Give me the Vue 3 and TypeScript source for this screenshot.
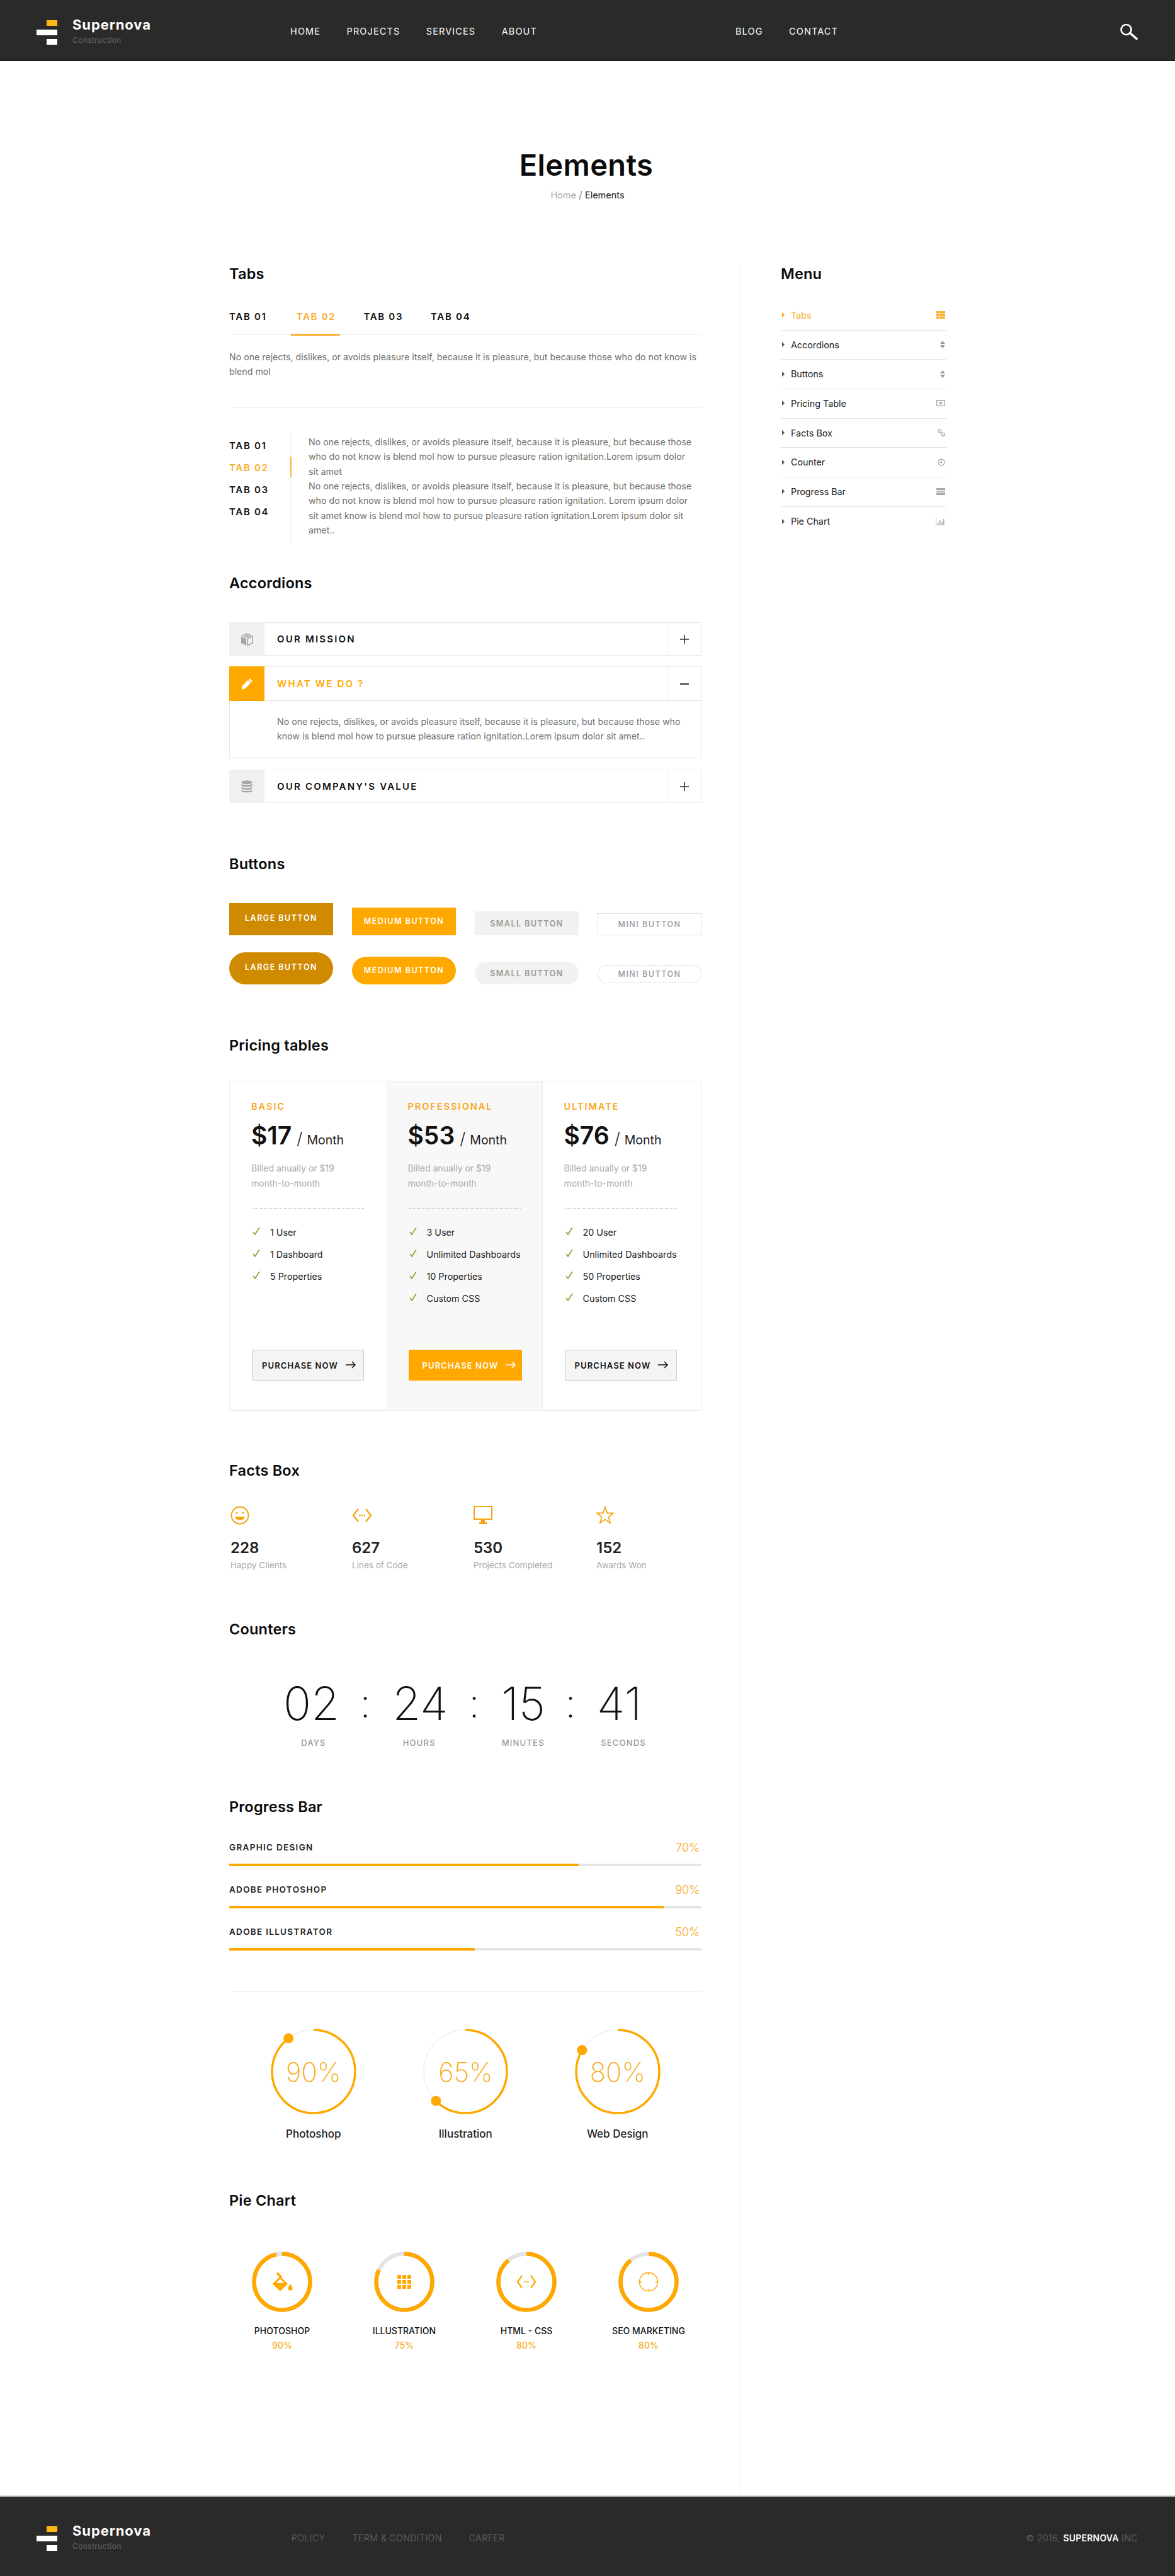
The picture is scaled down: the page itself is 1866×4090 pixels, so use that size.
<script setup lang="ts">
const orange = '#ffa800'
const nav1 = ['HOME', 'PROJECTS', 'SERVICES', 'ABOUT']
const nav2 = ['BLOG', 'CONTACT']
const tabs = ['TAB 01', 'TAB 02', 'TAB 03', 'TAB 04']
const menu = ['Tabs', 'Accordions', 'Buttons', 'Pricing Table', 'Facts Box', 'Counter', 'Progress Bar', 'Pie Chart']
const plans = [
  { name: 'BASIC', price: '$17', feats: ['1 User', '1 Dashboard', '5 Properties'] },
  { name: 'PROFESSIONAL', price: '$53', feats: ['3 User', 'Unlimited Dashboards', '10 Properties', 'Custom CSS'] },
  { name: 'ULTIMATE', price: '$76', feats: ['20 User', 'Unlimited Dashboards', '50 Properties', 'Custom CSS'] },
]
const facts = [
  { n: '228', l: 'Happy Clients' },
  { n: '627', l: 'Lines of Code' },
  { n: '530', l: 'Projects Completed' },
  { n: '152', l: 'Awards Won' },
]
const counters = ['02', '24', '15', '41']
const counterLabels = ['DAYS', 'HOURS', 'MINUTES', 'SECONDS']
const bars = [
  { l: 'GRAPHIC DESIGN', p: '70%', w: 74 },
  { l: 'ADOBE PHOTOSHOP', p: '90%', w: 92 },
  { l: 'ADOBE ILLUSTRATOR', p: '50%', w: 52 },
]
const rings = [
  { l: 'Photoshop', p: '90%', a: 89.7 },
  { l: 'Illustration', p: '65%', a: 62.5 },
  { l: 'Web Design', p: '80%', a: 83.6 },
]
function dot(a: number) {
  const t = (a / 100) * 2 * Math.PI
  return { x: 70 + 66 * Math.sin(t), y: 70 - 66 * Math.cos(t) }
}
const pies = [
  { l: 'PHOTOSHOP', p: '90%', a: 96.7 },
  { l: 'ILLUSTRATION', p: '75%', a: 82 },
  { l: 'HTML - CSS', p: '80%', a: 89 },
  { l: 'SEO MARKETING', p: '80%', a: 89 },
]
</script>

<template>
  <div class="page">
    <header class="top">
      <div class="logo">
        <div class="mark"><i class="b1"></i><i class="b2"></i><i class="b3"></i></div>
        <div class="brand"><b>Supernova</b><span>Construction</span></div>
      </div>
      <nav class="nav nav1"><a v-for="n in nav1" :key="n">{{ n }}</a></nav>
      <nav class="nav nav2"><a v-for="n in nav2" :key="n">{{ n }}</a></nav>
      <svg class="search" width="30" height="26" viewBox="0 0 30 26" fill="none" stroke="#fff">
        <circle cx="10.5" cy="10" r="8" stroke-width="2.6" />
        <path d="M16.5 15.5 L27 24.5" stroke-width="3.6" stroke-linecap="round" />
      </svg>
    </header>

    <section class="hero">
      <h1>Elements</h1>
      <p><span>Home</span> <em>/</em> Elements</p>
    </section>

    <div class="content">
      <main class="left">
        <section>
          <h2>Tabs</h2>
          <div class="tabs">
            <a v-for="(t, i) in tabs" :key="t" :class="{ on: i === 1 }">{{ t }}</a>
          </div>
          <p class="txt p1">
            No one rejects, dislikes, or avoids pleasure itself, because it is pleasure, but because those who do not know is<br />blend mol
          </p>
          <div class="rule r1"></div>
          <div class="vtabs">
            <div class="vnav">
              <a v-for="(t, i) in tabs" :key="t" :class="{ on: i === 1 }">{{ t }}</a>
            </div>
            <p class="txt">
              No one rejects, dislikes, or avoids pleasure itself, because it is pleasure, but because those<br />
              who do not know is blend mol how to pursue pleasure ration ignitation.Lorem ipsum dolor<br />
              sit amet<br />
              No one rejects, dislikes, or avoids pleasure itself, because it is pleasure, but because those<br />
              who do not know is blend mol how to pursue pleasure ration ignitation. Lorem ipsum dolor<br />
              sit amet know is blend mol how to pursue pleasure ration ignitation.Lorem ipsum dolor sit<br />
              amet..
            </p>
          </div>
        </section>

        <section class="s-acc">
          <h2>Accordions</h2>
          <div class="acc a1">
            <div class="ic">
              <svg width="20" height="22" viewBox="0 0 20 22">
                <path d="M10 1 L19 5 L10 9 L1 5 Z" fill="#bcbcbc" />
                <path d="M1 6.5 L9.2 10.2 V21 L1 17 Z" fill="#a6a6a6" />
                <path d="M19 6.5 L10.8 10.2 V21 L19 17 Z" fill="none" stroke="#a6a6a6" stroke-width="1.6" />
              </svg>
            </div>
            <div class="tt">OUR MISSION</div>
            <div class="pm">
              <svg width="16" height="16" viewBox="0 0 16 16" stroke="#333" stroke-width="1.6"><path d="M8 1V15M1 8H15" /></svg>
            </div>
          </div>
          <div class="acc a2 open">
            <div class="head">
              <div class="ic">
                <svg width="19" height="19" viewBox="0 0 19 19" fill="#fff">
                  <path d="M13.5 1 L18 5.5 L16.3 7.2 L11.8 2.7 Z" />
                  <path d="M10.8 3.7 L15.3 8.2 L6 17.5 L1 18.5 L1.8 13 Z" />
                </svg>
              </div>
              <div class="tt">WHAT WE DO ?</div>
              <div class="pm">
                <svg width="16" height="16" viewBox="0 0 16 16" stroke="#333" stroke-width="2"><path d="M1 8H15" /></svg>
              </div>
            </div>
            <p class="txt body">
              No one rejects, dislikes, or avoids pleasure itself, because it is pleasure, but because those who<br />
              know is blend mol how to pursue pleasure ration ignitation.Lorem ipsum dolor sit amet..
            </p>
          </div>
          <div class="acc a3">
            <div class="ic">
              <svg width="18" height="20" viewBox="0 0 18 20" fill="#a6a6a6">
                <ellipse cx="9" cy="3.2" rx="8.5" ry="3" />
                <path d="M.5 5.5C2 7.8 16 7.8 17.500 5.500V8.500C16 11 2 11 .5 8.500Z" />
                <path d="M.5 10.500C2 12.800 16 12.800 17.500 10.500V13C16 15.500 2 15.500 .5 13Z" />
                <path d="M.5 15C2 17.300 16 17.300 17.500 15V17C16 20 2 20 .5 17Z" />
              </svg>
            </div>
            <div class="tt">OUR COMPANY'S VALUE</div>
            <div class="pm">
              <svg width="16" height="16" viewBox="0 0 16 16" stroke="#333" stroke-width="1.6"><path d="M8 1V15M1 8H15" /></svg>
            </div>
          </div>
        </section>

        <section class="s-btn">
          <h2>Buttons</h2>
          <div class="btns b-r1">
            <a class="lg">LARGE BUTTON</a><a class="md">MEDIUM BUTTON</a><a class="sm">SMALL BUTTON</a><a class="mi">MINI BUTTON</a>
          </div>
          <div class="btns b-r2">
            <a class="lg">LARGE BUTTON</a><a class="md">MEDIUM BUTTON</a><a class="sm">SMALL BUTTON</a><a class="mi">MINI BUTTON</a>
          </div>
        </section>

        <section class="s-price">
          <h2>Pricing tables</h2>
          <div class="plans">
            <div v-for="(p, i) in plans" :key="p.name" class="plan" :class="{ mid: i === 1 }">
              <div class="pname">{{ p.name }}</div>
              <div class="pr"><b>{{ p.price }}</b><i>/</i><span>Month</span></div>
              <p class="bill">Billed anually or $19<br />month-to-month</p>
              <div class="dots"></div>
              <ul>
                <li v-for="f in p.feats" :key="f">
                  <svg width="12" height="14" viewBox="0 0 12 14" fill="none" stroke="#7f9a1f" stroke-width="1.5"><path d="M1 8 L4 12 L11 1" /></svg>
                  {{ f }}
                </li>
              </ul>
              <a class="buy">
                PURCHASE NOW
                <svg width="16" height="12" viewBox="0 0 16 12" fill="none" stroke="currentColor" stroke-width="1.5"><path d="M0 6H15M10 1L15 6L10 11" /></svg>
              </a>
            </div>
          </div>
        </section>

        <section class="s-facts">
          <h2>Facts Box</h2>
          <div class="facts">
            <div v-for="(f, i) in facts" :key="f.n" class="fact">
              <div class="ficon">
                <svg v-if="i === 0" width="30" height="30" viewBox="0 0 30 30" fill="none" stroke="#f5a511" stroke-width="2">
                  <circle cx="15" cy="15" r="13.500" />
                  <circle cx="10" cy="11" r="1.500" fill="#f5a511" stroke="none" />
                  <circle cx="20" cy="11" r="1.500" fill="#f5a511" stroke="none" />
                  <path d="M7 17H23C22 24 8 24 7 17Z" fill="#f5a511" stroke="none" />
                </svg>
                <svg v-if="i === 1" width="32" height="30" viewBox="0 0 32 30" fill="none" stroke="#f5a511" stroke-width="2.500">
                  <path d="M10 5L2 15L10 25M22 5L30 15L22 25" />
                  <path d="M11 15H21" stroke-dasharray="2.500 1.500" />
                </svg>
                <svg v-if="i === 2" width="30" height="30" viewBox="0 0 30 30">
                  <rect x="1" y="1" width="28" height="20" fill="none" stroke="#f5a511" stroke-width="2" />
                  <path d="M12 21H18V26H21V29H9V26H12Z" fill="#f5a511" />
                </svg>
                <svg v-if="i === 3" width="28" height="30" viewBox="0 0 28 30" fill="none" stroke="#f5a511" stroke-width="1.800">
                  <path d="M14 2L17.500 11.500H26.500L19.500 17.500L22 27L14 21.500L6 27L8.500 17.500L1.500 11.500H10.500Z" />
                </svg>
              </div>
              <div class="fnum">{{ f.n }}</div>
              <div class="flab">{{ f.l }}</div>
            </div>
          </div>
        </section>

        <section class="s-count">
          <h2>Counters</h2>
          <div class="cnt">
            <template v-for="(c, i) in counters" :key="c">
              <span>{{ c }}</span><span v-if="i < 3" class="colon">:</span>
            </template>
          </div>
          <div class="cnt-l"><span v-for="l in counterLabels" :key="l">{{ l }}</span></div>
        </section>

        <section class="s-prog">
          <h2>Progress Bar</h2>
          <div v-for="b in bars" :key="b.l" class="bar">
            <div class="bhead"><b>{{ b.l }}</b><span>{{ b.p }}</span></div>
            <div class="track"><div class="fill" :style="{ width: b.w + '%' }"></div></div>
          </div>
          <div class="rule r2"></div>
          <div class="rings">
            <div v-for="r in rings" :key="r.l" class="ring">
              <div class="rwrap">
                <svg width="140" height="140" viewBox="0 0 140 140" fill="none">
                  <circle cx="70" cy="70" r="66" stroke="#f3f3f3" stroke-width="2" />
                  <circle cx="70" cy="70" r="66" :stroke="orange" stroke-width="3.500" pathLength="100" :stroke-dasharray="`${r.a} 100`" transform="rotate(-90 70 70)" />
                  <circle :cx="dot(r.a).x" :cy="dot(r.a).y" r="8" :fill="orange" />
                </svg>
                <span class="rval">{{ r.p }}</span>
              </div>
              <div class="rlab">{{ r.l }}</div>
            </div>
          </div>
        </section>

        <section class="s-pie">
          <h2>Pie Chart</h2>
          <div class="pies">
            <div v-for="(p, i) in pies" :key="p.l" class="pie">
              <div class="pwrap">
                <svg width="96" height="96" viewBox="0 0 96 96" fill="none">
                  <circle cx="48" cy="48" r="44.500" stroke="#e4e4e4" stroke-width="6.500" />
                  <circle cx="48" cy="48" r="44.500" :stroke="orange" stroke-width="6.500" pathLength="100" :stroke-dasharray="`${p.a} 100`" transform="rotate(-90 48 48)" />
                </svg>
                <span class="pico">
                  <svg v-if="i === 0" width="34" height="30" viewBox="0 0 34 30" :fill="orange">
                    <path d="M14 6.500L26 18L14 30L1.500 18Z" />
                    <path d="M14 10.500L20.500 17H7.500Z" fill="#fff" />
                    <path d="M9 0.500L16 8" :stroke="orange" stroke-width="3.500" />
                    <path d="M30 18.500c-2 3-3.500 4.500-3.500 6.800a3.500 3.500 0 0 0 7 0c0-2.300-1.500-3.800-3.500-6.800z" />
                  </svg>
                  <svg v-if="i === 1" width="22" height="22" viewBox="0 0 22 22" :fill="orange">
                    <rect x="0" y="0" width="6" height="6" /><rect x="8" y="0" width="6" height="6" /><rect x="16" y="0" width="6" height="6" />
                    <rect x="0" y="8" width="6" height="6" /><rect x="8" y="8" width="6" height="6" /><rect x="16" y="8" width="6" height="6" />
                    <rect x="0" y="16" width="6" height="6" /><rect x="8" y="16" width="6" height="6" /><rect x="16" y="16" width="6" height="6" />
                  </svg>
                  <svg v-if="i === 2" width="32" height="22" viewBox="0 0 32 22" fill="none" :stroke="orange" stroke-width="2.200">
                    <path d="M9 1L2 11L9 21M23 1L30 11L23 21" />
                    <path d="M12 11H20" stroke-dasharray="2.200 1.400" />
                  </svg>
                  <svg v-if="i === 3" width="32" height="32" viewBox="0 0 32 32" fill="none" :stroke="orange" stroke-width="1.400">
                    <circle cx="16" cy="16" r="14.500" />
                    <path d="M16 1.500V5M16 27V30.500M1.500 16H5M27 16H30.500" />
                  </svg>
                </span>
              </div>
              <div class="plab">{{ p.l }}</div>
              <div class="pval">{{ p.p }}</div>
            </div>
          </div>
        </section>
      </main>

      <aside class="side">
        <h2>Menu</h2>
        <ul class="menu">
          <li v-for="(m, i) in menu" :key="m" :class="{ on: i === 0 }">
            <i class="tri"></i>
            <span>{{ m }}</span>
            <svg v-if="i === 0" width="14" height="12" viewBox="0 0 14 12" fill="#f9ae2b">
              <rect width="4" height="3.500" /><rect x="5" width="9" height="3.500" />
              <rect y="4.300" width="4" height="3.500" /><rect x="5" y="4.300" width="9" height="3.500" />
              <rect y="8.500" width="4" height="3.500" /><rect x="5" y="8.500" width="9" height="3.500" />
            </svg>
            <svg v-if="i === 1 || i === 2" width="8" height="12" viewBox="0 0 8 12" fill="#9a9a9a">
              <path d="M4 0L8 5H0ZM4 12L0 7H8Z" />
            </svg>
            <svg v-if="i === 3" width="14" height="10" viewBox="0 0 14 10" fill="none" stroke="#a8a8a8" stroke-width="1.400">
              <rect x=".7" y=".7" width="12.600" height="8.600" /><circle cx="7" cy="5" r="2.200" fill="#a8a8a8" stroke="none" />
            </svg>
            <svg v-if="i === 4" width="12" height="12" viewBox="0 0 12 12" fill="none" stroke="#a8a8a8" stroke-width="1.300">
              <circle cx="3.200" cy="3.200" r="2.400" /><circle cx="8.800" cy="8.800" r="2.400" /><path d="M5 5L7 7" />
            </svg>
            <svg v-if="i === 5" width="12" height="12" viewBox="0 0 12 12" fill="none" stroke="#a8a8a8" stroke-width="1.300">
              <circle cx="6" cy="6" r="5" /><path d="M6.300 3V6.500H4" />
            </svg>
            <svg v-if="i === 6" width="14" height="11" viewBox="0 0 14 11" fill="#a8a8a8">
              <rect width="14" height="3" /><rect y="4" width="14" height="3" fill="#bbb" /><rect y="8" width="14" height="3" />
            </svg>
            <svg v-if="i === 7" width="15" height="12" viewBox="0 0 15 12" fill="#a8a8a8">
              <path d="M0 0H.8V11.200H15V12H0Z" /><rect x="3" y="7" width="1.500" height="4" /><rect x="6" y="4" width="1.500" height="7" /><rect x="9" y="6" width="1.500" height="5" /><rect x="12" y="2" width="1.500" height="9" />
            </svg>
          </li>
        </ul>
      </aside>
    </div>

    <footer class="foot">
      <div class="logo">
        <div class="mark"><i class="b1"></i><i class="b2"></i><i class="b3"></i></div>
        <div class="brand"><b>Supernova</b><span>Construction</span></div>
      </div>
      <nav class="fnav"><a>POLICY</a><a>TERM &amp; CONDITION</a><a>CAREER</a></nav>
      <div class="copy">© 2016, <b>SUPERNOVA</b> INC</div>
    </footer>
  </div>
</template>

<style>
html, body { margin: 0; background: #fff; }
</style>

<style scoped>
.page { width: 1866px; font-family: Inter, "Open Sans", sans-serif; color: #111; overflow: hidden; }
h1, h2, p, ul { margin: 0; padding: 0; }
ul { list-style: none; }
i, em { font-style: normal; }

.top { height: 96px; border-bottom: 1px solid #111; background: #2b2a2a; display: flex; align-items: flex-start; padding-left: 58px; position: relative; }
.logo { display: flex; }
.top .logo { margin-top: 24px; }
.mark { width: 33px; display: flex; flex-direction: column; align-items: flex-end; padding-top: 8px; gap: 6px; }
.mark i { height: 9px; background: #fff; }
.mark .b1 { width: 17px; background: #fdb813; }
.mark .b2 { width: 33px; }
.mark .b3 { width: 17px; }
.brand { margin-left: 24px; display: flex; flex-direction: column; }
.brand b { color: #fff; font-size: 22px; font-weight: 700; line-height: 30px; letter-spacing: .9px; }
.brand span { color: #666; font-size: 12px; line-height: 16px; margin-top: 2px; letter-spacing: .4px; }
.nav { display: flex; gap: 41.500px; margin-top: 40px; }
.nav a { color: #fff; font-size: 14.500px; line-height: 20px; letter-spacing: 1.100px; font-weight: 400; }
.nav1 { position: absolute; left: 461px; }
.nav2 { position: absolute; left: 1168px; }
.search { position: absolute; left: 1778px; top: 37px; }

.hero { height: 323px; box-sizing: border-box; padding-top: 135px; text-align: center; }
.hero h1 { font-size: 47px; line-height: 60px; font-weight: 600; letter-spacing: .4px; color: #0b0b0b; margin-left: -4px; }
.hero p { margin-top: 7px; font-size: 14.500px; line-height: 20px; color: #222; }
.hero p span { color: #aaa; }
.hero p em { color: #888; font-size: 16px; }

.content { display: grid; grid-template-columns: 750px 1fr; padding-left: 364px; column-gap: 62px; height: 3542px; }
h2 { font-size: 23.500px; line-height: 30px; font-weight: 600; letter-spacing: .2px; color: #0b0b0b; }
.side { border-left: 1px solid #eee; padding-left: 63px; }

.tabs { margin-top: 33px; height: 49px; display: flex; position: relative; }
.tabs::after { content: ""; position: absolute; left: 4px; right: 0; bottom: 0; height: 1px; background: #eaeaea; }
.tabs a { width: 106.700px; line-height: 40px; font-size: 15px; font-weight: 600; letter-spacing: 1.700px; color: #111; position: relative; }
.tabs a.on, .vnav a.on { color: #f9ae2b; }
.tabs a.on::after { content: ""; position: absolute; left: -9px; width: 78px; bottom: -1px; height: 3px; background: #fbb131; z-index: 1; }
.txt { font-size: 14.180px; line-height: 23.330px; color: #707070; white-space: nowrap; letter-spacing: 0; font-weight: 400; }
.p1 { margin-top: 22.500px; }
.rule { height: 1px; background: #ececec; margin-left: 4px; }
.r1 { margin-top: 46px; }
.vtabs { margin-top: 42px; display: flex; min-height: 171px; }
.vnav { width: 97px; border-right: 2px solid #f2f2f2; display: flex; flex-direction: column; flex: none; }
.vnav a { height: 35px; line-height: 35px; font-size: 15px; font-weight: 600; letter-spacing: 1.700px; color: #111; margin-right: -2px; }
.vnav a.on { height: 32px; margin-bottom: 3px; border-right: 2px solid #fbb131; }
.vtabs .txt { margin-left: 27px; }

.s-acc { margin-top: 50px; }
.s-acc h2 { margin-bottom: 47px; }
.acc { border: 1px solid #e8e8e8; box-sizing: border-box; display: flex; height: 53px; }
.ic { width: 56px; margin: -1px 0 -1px -1px; background: #f0f0f0; display: flex; align-items: center; justify-content: center; flex: none; }
.tt { flex: 1; padding-left: 20px; font-size: 15px; font-weight: 600; letter-spacing: 2.200px; display: flex; align-items: center; color: #111; }
.pm { width: 53px; border-left: 1px solid #e8e8e8; display: flex; align-items: center; justify-content: center; flex: none; }
.a2 { margin-top: 17px; height: 146px; flex-direction: column; }
.a2 .head { display: flex; height: 53px; border-bottom: 1px solid #e0e0e0; flex: none; }
.a2 .ic { background: #ffa800; }
.a2 .tt { color: #ffa800; }
.a2 .body { padding: 21px 0 0 75px; }
.a3 { margin-top: 18px; }

.s-btn { margin-top: 82px; }
.btns { display: flex; justify-content: space-between; align-items: flex-end; }
.b-r1 { margin-top: 47px; }
.b-r2 { margin-top: 27px; }
.btns a { width: 165px; box-sizing: border-box; display: flex; align-items: center; justify-content: center; font-size: 12.500px; font-weight: 600; letter-spacing: 1.500px; }
.lg { height: 51px; background: #cf8a00; color: #fff; padding-bottom: 5px; }
.md { height: 44px; background: #ffa800; color: #fff; padding-bottom: 1px; }
.sm { height: 38px; background: #f1f1f1; color: #999; }
.mi { height: 35px; border: 1px dashed #ccc; color: #999; font-weight: 500 !important; }
.b-r2 a { border-radius: 26px; }
.b-r2 .sm { height: 36px; }
.b-r2 .mi { height: 29px; margin-bottom: 2px; }

.s-price { margin-top: 82px; }
.plans { margin-top: 41px; height: 524px; display: grid; grid-template-columns: 248.500px 248px 1fr; border: 1px solid #ececec; box-sizing: border-box; }
.plan { padding: 29px 0 47px 34px; display: flex; flex-direction: column; }
.plan.mid { background: #f8f8f8; border-left: 1px solid #ececec; border-right: 1px solid #ececec; padding-left: 33px; }
.plan .dots, .plan .buy { width: 178px; }
.pname { font-size: 14.500px; line-height: 22px; font-weight: 600; letter-spacing: 2px; color: #f9a61a; }
.pr { margin-top: 10px; height: 50px; display: flex; align-items: baseline; color: #111; }
.pr b { font-size: 39px; line-height: 50px; font-weight: 600; }
.pr i { font-size: 26px; font-weight: 300; margin: 0 7px 0 8px; color: #222; }
.pr span { font-size: 19.500px; color: #222; font-weight: 400; }
.bill { margin-top: 15px; font-size: 14px; line-height: 24px; color: #aaa; }
.dots { margin-top: 27px; border-top: 1px dotted #bbb; margin-left: 1px; }
.plan ul { margin: 20px 0 0 2px; }
.plan li { height: 35px; display: flex; align-items: center; font-size: 14.300px; color: #222; }
.plan li svg { margin-right: 16px; margin-top: -4px; flex: none; }
.buy { margin-top: auto; margin-left: 1px; height: 49px; box-sizing: border-box; background: #f4f4f4; border: 1px solid #ccc; display: flex; align-items: center; padding-left: 15px; font-size: 13px; font-weight: 600; letter-spacing: 1.100px; color: #111; white-space: nowrap; }
.buy svg { margin-left: 12px; margin-top: -2px; }
.plan.mid .buy { width: 180px; background: #ffa800; border-color: #ffa800; color: #fff; padding-left: 21px; }

.s-facts { margin-top: 80px; }
.facts { margin-top: 40px; display: grid; grid-template-columns: 193px 193px 195px 1fr; padding-left: 2px; }
.ficon { height: 32px; display: flex; align-items: center; }
.fnum { margin-top: 20px; font-size: 24px; line-height: 32px; font-weight: 600; color: #222; }
.flab { font-size: 13.500px; line-height: 22px; color: #aaa; }

.s-count { margin-top: 76px; }
.cnt { margin: 63px 0 0 86px; display: grid; grid-template-columns: 87px 86px 89px 82px 74px 76px 79px; font-size: 73px; line-height: 80px; font-weight: 200; text-align: center; color: #111; }
.colon { font-size: 62px; }
.cnt-l { margin: 11.500px 0 0 50px; display: grid; grid-template-columns: 168px 167.500px 162.500px 156px; font-size: 13px; line-height: 20px; font-weight: 500; letter-spacing: 1.200px; color: #999; text-align: center; }

.s-prog { margin-top: 77.500px; }
.bar { margin-top: 27px; height: 40px; }
.s-prog h2 + .bar { margin-top: 37px; }
.bhead { display: flex; justify-content: space-between; align-items: center; height: 24px; }
.bhead b { font-size: 13.500px; font-weight: 600; letter-spacing: 1.300px; color: #222; }
.bhead span { font-size: 18px; font-weight: 300; color: #f9a61a; padding-right: 3px; }
.track { margin-top: 13.500px; height: 4px; background: #e4e4e4; }
.fill { height: 100%; background: #ffa800; }
.r2 { margin-top: 66px; }
.rings { margin: 57px 0 0 13px; display: grid; grid-template-columns: repeat(3, 241.500px); }
.ring { text-align: center; }
.rwrap { width: 140px; height: 140px; margin: 0 auto; position: relative; }
.rval { position: absolute; inset: 0; display: flex; align-items: center; justify-content: center; font-size: 42px; font-weight: 200; color: #f9ab20; }
.rlab { margin-top: 16px; font-size: 17px; line-height: 26px; font-weight: 500; color: #222; }

.s-pie { margin-top: 78px; }
.pies { margin: 66px 0 0 -13px; display: grid; grid-template-columns: repeat(4, 194px); }
.pie { text-align: center; }
.pwrap { width: 96px; height: 96px; margin: 0 auto; position: relative; }
.pico { position: absolute; inset: 0; display: flex; align-items: center; justify-content: center; }
.plab { margin-top: 20px; font-size: 14px; line-height: 20px; font-weight: 500; color: #111; }
.pval { margin-top: 3px; font-size: 14px; line-height: 20px; font-weight: 500; color: #f9ab20; }

.menu { margin-top: 28px; width: 263px; }
.menu li { height: 46.700px; box-sizing: border-box; border-bottom: 1px solid #e4e4e4; display: flex; align-items: center; font-size: 14.300px; color: #222; padding-right: 2px; padding-bottom: 1px; }
.menu li:last-child { border-bottom: 0; }
.menu li span { flex: 1; margin-left: 10px; }
.menu li.on { color: #f9ae2b; }
.tri { width: 0; height: 0; margin-left: 2px; border-left: 4px solid #555; border-top: 4px solid transparent; border-bottom: 4px solid transparent; }
.menu li.on .tri { border-left-color: #ffa800; }

.foot { height: 128px; box-sizing: border-box; background: #2b2a2a; border-top: 2px solid #d5d5d5; padding-left: 58px; position: relative; }
.foot .logo { padding-top: 39px; }
.fnav { position: absolute; left: 463px; top: 56px; display: flex; gap: 43px; }
.fnav a, .copy { font-size: 14px; line-height: 20px; color: #666; letter-spacing: .5px; font-weight: 300; }
.copy { position: absolute; right: 59px; top: 56px; }
.copy b { color: #fff; font-weight: 600; letter-spacing: .2px; }
</style>
